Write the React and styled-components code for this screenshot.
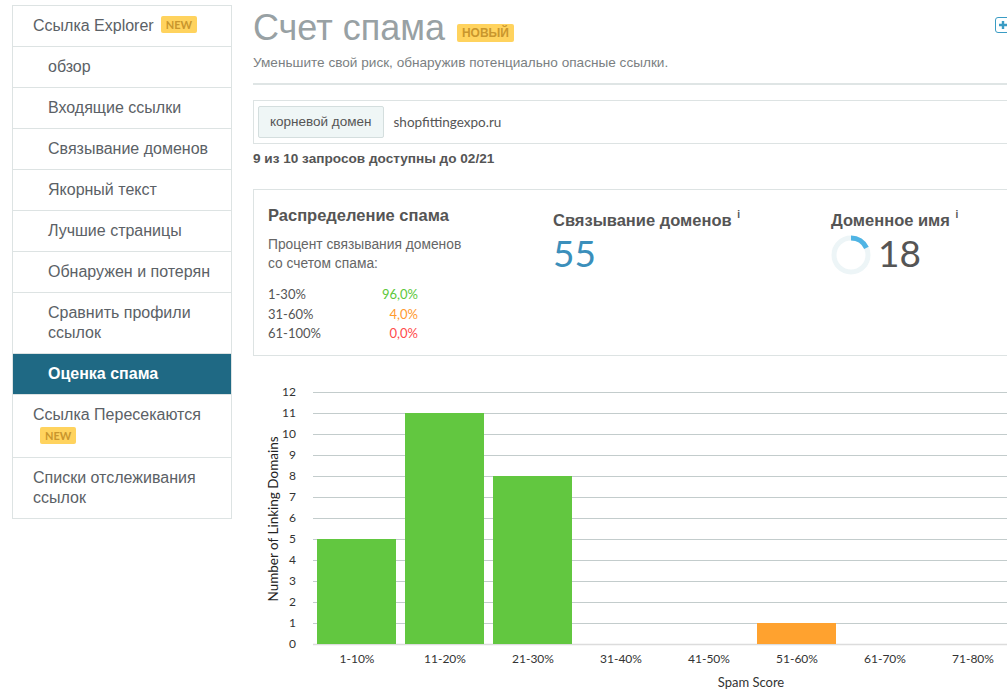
import React from 'react';
import styled, {createGlobalStyle} from "styled-components";

const GlobalStyle = createGlobalStyle`
  html, body {
    margin: 0;
    padding: 0;
    background: #fff;
    overflow: hidden;
  }
  body {
    font-family: "Liberation Sans", Arial, sans-serif;
    color: #555;
  }
`;

const menu = [
    {label: 'Ссылка Explorer', badge: true},
    {label: 'обзор', sub: true},
    {label: 'Входящие ссылки', sub: true},
    {label: 'Связывание доменов', sub: true},
    {label: 'Якорный текст', sub: true},
    {label: 'Лучшие страницы', sub: true},
    {label: 'Обнаружен и потерян', sub: true},
    {label: 'Сравнить профили ссылок', sub: true},
    {label: 'Оценка спама', sub: true, active: true},
    {label: 'Ссылка Пересекаются', badge: true, wrapBadge: true},
    {label: 'Списки отслеживания ссылок'},
];

const distribution = [
    {range: '1-30%', value: '96,0%', color: '#5cc73a'},
    {range: '31-60%', value: '4,0%', color: '#ff9a2e'},
    {range: '61-100%', value: '0,0%', color: '#ff4b4b'},
];

const bars = [
    {label: '1-10%', value: 5},
    {label: '11-20%', value: 11},
    {label: '21-30%', value: 8},
    {label: '31-40%', value: 0},
    {label: '41-50%', value: 0},
    {label: '51-60%', value: 1, warn: true},
    {label: '61-70%', value: 0},
    {label: '71-80%', value: 0},
    {label: '81-90%', value: 0},
    {label: '91-100%', value: 0},
];

const SpamChart = () => {
    const left = 60;
    const base = 270;
    const unit = 21;
    const step = 88;
    const ticks = Array.from({length: 13}, (_, i) => i);

    return (
        <ChartSvg width="940" height="320" viewBox="0 0 940 320">
            {ticks.map(t => (
                <g key={t}>
                    {t > 0 && <line x1={left} x2={940} y1={base - t * unit + 0.5} y2={base - t * unit + 0.5}
                                    stroke="#c3cccc" strokeWidth="1"/>}
                    <text x="43" y={base - t * unit + 4} textAnchor="end" fontSize="12" fill="#333">{t}</text>
                </g>
            ))}
            <line x1={left} x2={940} y1={base + 0.5} y2={base + 0.5} stroke="#dcdcdc" strokeWidth="1.5"/>
            {bars.map((b, i) => (
                <g key={b.label}>
                    {b.value > 0 && <rect x={left + step * i + 4} y={base - b.value * unit} width="79"
                                          height={b.value * unit} fill={b.warn ? '#ffa22f' : '#62c740'}/>}
                    <text x={left + step * i + 44} y="289" textAnchor="middle" fontSize="12"
                          fill="#333">{b.label}</text>
                </g>
            ))}
            <text x="0" y="0" transform="translate(25 145) rotate(-90)" textAnchor="middle" fontSize="13.5"
                  fill="#222">Number of Linking Domains</text>
            <text x="498" y="313" textAnchor="middle" fontSize="13" fill="#333">Spam Score</text>
        </ChartSvg>
    );
};

const App = () => {
    return (
        <Page>
            <GlobalStyle/>
            <Sidebar>
                {menu.map(item => (
                    <MenuItem key={item.label} sub={item.sub} active={item.active}>
                        {item.label}
                        {item.badge && (item.wrapBadge
                            ? <><br/><NewBadge small>NEW</NewBadge></>
                            : <NewBadge>NEW</NewBadge>)}
                    </MenuItem>
                ))}
            </Sidebar>

            <Main>
                <TitleRow>
                    <Title>Счет спама</Title>
                    <TitleBadge>НОВЫЙ</TitleBadge>
                    <AddButton>
                        <svg width="10" height="10" viewBox="0 0 10 10">
                            <path d="M5 1v8M1 5h8" stroke="#3a9cc4" strokeWidth="2.4"/>
                        </svg>
                    </AddButton>
                </TitleRow>
                <Subtitle>Уменьшите свой риск, обнаружив потенциально опасные ссылки.</Subtitle>

                <SearchBox>
                    <ScopeButton>корневой домен</ScopeButton>
                    <DomainText>shopfittingexpo.ru</DomainText>
                </SearchBox>
                <Quota>9 из 10 запросов доступны до 02/21</Quota>

                <Card>
                    <CardCol width={285}>
                        <CardTitle>Распределение спама</CardTitle>
                        <CardText>Процент связывания доменов<br/>со счетом спама:</CardText>
                        <DistTable>
                            {distribution.map(d => (
                                <React.Fragment key={d.range}>
                                    <DistRange>{d.range}</DistRange>
                                    <DistValue color={d.color}>{d.value}</DistValue>
                                </React.Fragment>
                            ))}
                        </DistTable>
                    </CardCol>
                    <CardCol width={278}>
                        <CardTitle>Связывание доменов <Info>i</Info></CardTitle>
                        <BigNumber color="#3b8fbb">55</BigNumber>
                    </CardCol>
                    <CardCol>
                        <CardTitle>Доменное имя <Info>i</Info></CardTitle>
                        <ScoreRow>
                            <svg width="40" height="40" viewBox="0 0 40 40">
                                <circle cx="20" cy="20" r="17" fill="none" stroke="#edf5f7" strokeWidth="5"/>
                                <circle cx="20" cy="20" r="17" fill="none" stroke="#4fb4e4" strokeWidth="5"
                                        strokeDasharray={`${2 * Math.PI * 17 * 0.18} 200`}
                                        transform="rotate(-90 20 20)"/>
                            </svg>
                            <BigNumber color="#555">18</BigNumber>
                        </ScoreRow>
                    </CardCol>
                </Card>

                <SpamChart/>
            </Main>
        </Page>
    );
};

const Page = styled.div`
  display: flex;
  align-items: flex-start;
  gap: 21px;
  padding: 5px 0 0 12px;
  width: 1220px;
`;

const Sidebar = styled.nav`
  width: 218px;
  flex-shrink: 0;
  border: 1px solid #dde3e3;
  border-bottom: none;
`;

const MenuItem = styled.div`
  padding: 10px 10px 10px ${props => props.sub ? 35 : 20}px;
  font-size: 16px;
  line-height: 20px;
  color: ${props => props.active ? '#fff' : '#5b6166'};
  font-weight: ${props => props.active ? 700 : 400};
  background: ${props => props.active ? '#1f6984' : '#fff'};
  border-bottom: 1px solid #dde3e3;
`;

const NewBadge = styled.span`
  display: inline-block;
  margin-left: ${props => props.small ? 7 : 7}px;
  margin-top: ${props => props.small ? 2 : 0}px;
  padding: 1px 5px;
  font-family: Lato, "Liberation Sans", sans-serif;
  font-size: 11px;
  line-height: 15px;
  font-weight: 700;
  color: #c9962d;
  background: #ffd35e;
  border-radius: 2px;
  vertical-align: 2px;
`;

const Main = styled.main`
  width: 940px;
  flex-shrink: 0;
`;

const TitleRow = styled.div`
  display: flex;
  align-items: center;
  height: 42px;
  padding-top: 2px;
`;

const Title = styled.h1`
  margin: 0;
  font-size: 36px;
  font-weight: 400;
  line-height: 42px;
  color: #98a1a4;
`;

const TitleBadge = styled.span`
  margin: 10px 0 0 12px;
  padding: 1px 5px;
  font-size: 12px;
  font-weight: 700;
  line-height: 16px;
  color: #c9962d;
  background: #ffd35e;
  border-radius: 2px;
`;

const AddButton = styled.span`
  display: flex;
  align-items: center;
  justify-content: center;
  margin: -6px 0 0 auto;
  width: 24px;
  height: 14px;
  border: 1.5px solid #3a9cc4;
  border-radius: 3px;
  position: relative;
  left: -172px;
  svg {
    margin-right: 10px;
  }
`;

const Subtitle = styled.p`
  margin: 6px 0 0;
  padding-bottom: 12px;
  font-size: 13.6px;
  line-height: 16px;
  color: #7b7f82;
  border-bottom: 2px solid #dfe5e5;
`;

const SearchBox = styled.div`
  display: flex;
  align-items: center;
  gap: 10px;
  margin-top: 15px;
  padding: 5px 4px;
  border: 1px solid #dde3e3;
`;

const ScopeButton = styled.div`
  padding: 0 11px;
  height: 30px;
  line-height: 30px;
  font-size: 13.5px;
  color: #555;
  background: #eff6f6;
  border: 1px solid #d4dede;
  border-radius: 2px;
`;

const DomainText = styled.span`
  font-family: Lato, "Liberation Sans", sans-serif;
  font-size: 13.5px;
  color: #555;
`;

const Quota = styled.div`
  margin-top: 6px;
  font-size: 13.6px;
  font-weight: 700;
  line-height: 18px;
  color: #555;
`;

const Card = styled.section`
  display: flex;
  margin-top: 21px;
  padding: 14px 14px 11px;
  border: 1px solid #dde3e3;
`;

const CardCol = styled.div`
  width: ${props => props.width ? `${props.width}px` : 'auto'};
  flex-shrink: 0;
`;

const CardTitle = styled.h3`
  margin: 0;
  font-size: 16.5px;
  line-height: 22px;
  font-weight: 700;
  color: #555;
`;

const Info = styled.sup`
  font-size: 10px;
  font-weight: 700;
  vertical-align: 8px;
  margin-left: 1px;
`;

const CardText = styled.p`
  margin: 9px 0 0;
  font-size: 13.8px;
  line-height: 19px;
  color: #666;
`;

const DistTable = styled.div`
  display: grid;
  grid-template-columns: 110px 40px;
  margin-top: 12px;
  font-family: Lato, "Liberation Sans", sans-serif;
  font-size: 13px;
  line-height: 19.5px;
`;

const DistRange = styled.span`
  color: #555;
`;

const DistValue = styled.span`
  text-align: right;
  color: ${props => props.color};
`;

const BigNumber = styled.div`
  margin-top: 0;
  font-family: Lato, "Liberation Sans", sans-serif;
  font-size: 37px;
  line-height: 44px;
  color: ${props => props.color};
`;

const ScoreRow = styled.div`
  display: flex;
  align-items: center;
  gap: 7px;
  svg {
    margin-top: 4px;
  }
`;

const ChartSvg = styled.svg`
  display: block;
  margin-top: 18px;
  font-family: Lato, "Liberation Sans", sans-serif;
`;

export default App;
